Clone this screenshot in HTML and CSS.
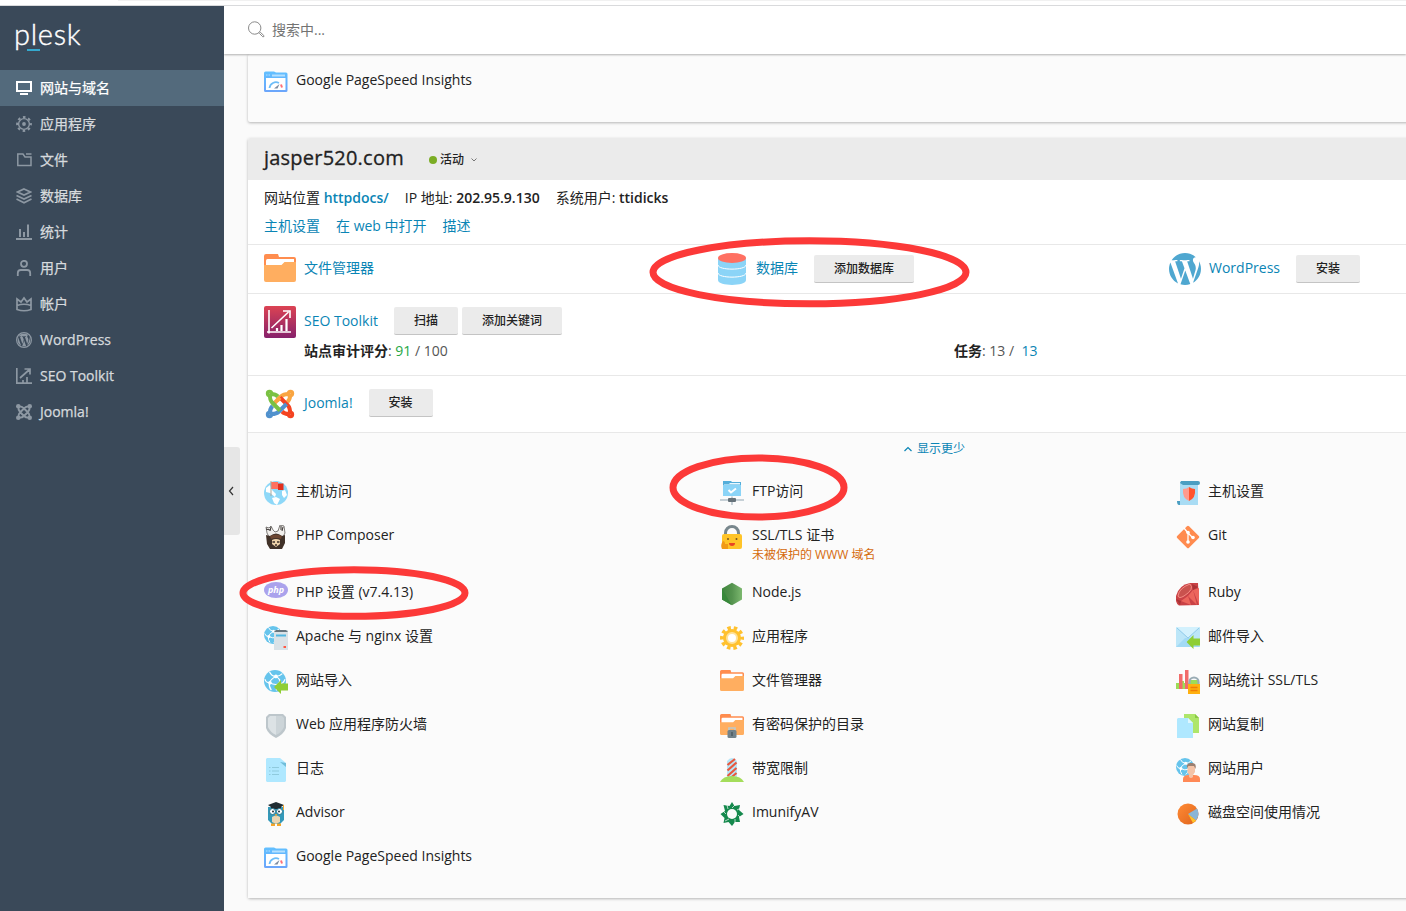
FILE: index.html
```
<!DOCTYPE html>
<html lang="zh-CN">
<head>
<meta charset="utf-8">
<title>Plesk</title>
<link rel="stylesheet" href="styles.css">
</head>
<body>
<svg class="sprite" width="0" height="0">
  <defs>
    <linearGradient id="g-seo" x1="0" y1="0" x2="0" y2="1"><stop offset="0" stop-color="#dc4353"/><stop offset="1" stop-color="#86216b"/></linearGradient>
    <linearGradient id="g-page" x1="0" y1="0" x2="0" y2="1"><stop offset="0" stop-color="#62c0ff"/><stop offset="1" stop-color="#6ba5fb"/></linearGradient>
    <linearGradient id="g-node" x1="0" y1="0" x2="1" y2="0"><stop offset="0" stop-color="#3e863d"/><stop offset=".5" stop-color="#55934f"/><stop offset="1" stop-color="#7cb86f"/></linearGradient>
    <linearGradient id="g-pie" x1="0" y1="0" x2="1" y2="1"><stop offset="0" stop-color="#ff8b35"/><stop offset="1" stop-color="#df631c"/></linearGradient>
  </defs>
  <symbol id="wp" viewBox="1.2 1.2 21.6 21.6"><path fill="currentColor" d="M21.469 6.825c.84 1.537 1.318 3.3 1.318 5.175 0 3.979-2.156 7.456-5.363 9.325l3.295-9.527c.615-1.54.82-2.771.82-3.864 0-.405-.026-.78-.07-1.11m-7.981.105c.647-.03 1.232-.105 1.232-.105.582-.075.514-.93-.067-.899 0 0-1.755.135-2.88.135-1.064 0-2.85-.15-2.85-.15-.585-.03-.661.855-.075.885 0 0 .54.061 1.125.09l1.68 4.605-2.37 7.08L5.354 6.9c.649-.03 1.234-.1 1.234-.1.585-.075.516-.93-.065-.896 0 0-1.746.138-2.874.138-.2 0-.438-.008-.69-.015C4.911 3.15 8.235 1.215 12 1.215c2.809 0 5.365 1.072 7.286 2.833-.046-.003-.091-.009-.141-.009-1.06 0-1.812.923-1.812 1.914 0 .89.513 1.643 1.06 2.531.411.72.89 1.643.89 2.977 0 .915-.354 1.994-.821 3.479l-1.075 3.585-3.9-11.61.001.014zM12 22.784c-1.059 0-2.081-.153-3.048-.437l3.237-9.406 3.315 9.087c.024.053.05.101.078.149-1.12.393-2.325.609-3.582.609M1.211 12c0-1.564.336-3.05.935-4.39L7.29 21.709C3.694 19.96 1.212 16.271 1.211 12"/></symbol>
  <symbol id="folder" viewBox="0 0 32 28"><path fill="#ff8d4f" d="M0 2a2 2 0 0 1 2-2h12l1 3h15a2 2 0 0 1 2 2v8H0z"/><path fill="#fff" d="M2 6.500a1.500 1.500 0 0 1 1.500-1.500H30v8H2z"/><path fill="#ffae60" d="M0 11h17.500l3-3H32v18a2 2 0 0 1-2 2H2a2 2 0 0 1-2-2z"/></symbol>
  <symbol id="globe" viewBox="0 0 24 24"><circle cx="12" cy="12" r="12" fill="#66c4ec"/><g fill="none" stroke="#fff" stroke-width="1.300"><path d="M6 2q2 5 7 5 4 0 7-3M13 7q-6 3-7 7-1 4 2 8M13 7q6 3 4 8-1 5-4 7M1 10q1 4 5 4 6 3 11 1 4 0 6-5"/></g><g fill="#fff"><circle cx="13" cy="7" r="2"/><circle cx="6.500" cy="14" r="2"/><circle cx="17" cy="15" r="1.800"/></g></symbol>
  <symbol id="pagespeed" viewBox="0 0 24 24"><path fill="url(#g-page)" d="M0 3a1.500 1.500 0 0 1 1.500-1.500H10L12 2.500h10A1.500 1.500 0 0 1 23.500 4V20.500a1.500 1.500 0 0 1-1.500 1.500H1.500A1.500 1.500 0 0 1 0 20.500z"/><path fill="#fff" d="M2 8h19.500v12H2z"/><path stroke="#b5e0ff" d="M2 5h1.500M4.500 5H6"/><path stroke="#b5e0ff" stroke-width="2" d="M8 5.500h13"/><path fill="none" stroke="#6dbdf8" stroke-width="1.800" d="M5.500 18a6.500 6.500 0 0 1 9.500-5"/><path fill="#7c8ba0" d="M10 18.500l5.500-4.500L13.500 18.500z"/><path fill="none" stroke="#ff6f78" stroke-width="2" d="M17 14.500l1 3"/></symbol>
  <symbol id="arrow" viewBox="0 0 14 14"><path fill="#8fce35" d="M0 7l7-7v3.500h7v7H7V14z"/></symbol>
</svg>

<div class="chrome"></div>
<div class="app">
  <aside class="sidebar">
    <div class="logo"><span>plesk</span><i></i></div>
    <nav class="menu">
      <a class="item active"><svg viewBox="0 0 16 16"><path d="M1 2h14v9H1zM4 14h8"/></svg>网站与域名</a>
      <a class="item"><svg viewBox="0 0 16 16"><circle cx="8" cy="8" r="5.400" stroke-width="1.400"/><circle cx="8" cy="8" r="6.900" stroke-width="2" stroke-dasharray="2.600 2.820" stroke-dashoffset="1.300"/><circle cx="8" cy="8" r="1.900" class="solid"/></svg>应用程序</a>
      <a class="item"><svg viewBox="0 0 16 16"><path d="M1.800 2h5.200l2 3h6v8.500H1.800zM10 2h5.500" stroke-width="1.500"/></svg>文件</a>
      <a class="item"><svg viewBox="0 0 16 16"><path d="M8 1l6.500 3L8 7 1.500 4zM.500 7.500L8 11l7.500-3.500M.500 11L8 14.700l7.500-3.700" stroke-width="1.700"/></svg>数据库</a>
      <a class="item"><svg viewBox="0 0 16 16"><path d="M0 15h16M4 5v8M8 8v5M12 .500V13"/></svg>统计</a>
      <a class="item"><svg viewBox="0 0 16 16"><circle cx="8" cy="3.800" r="3" stroke-width="1.800"/><path d="M1.800 16v-3q0-3 3-3h6.400q3 0 3 3v3" stroke-width="1.800"/></svg>用户</a>
      <a class="item"><svg viewBox="0 0 16 16"><path d="M1 13.500V3l4 3 3-4 3 4 4-3v10.500q-7 2.500-14 0zM1 9.500q7-2.500 14 0" stroke-width="1.700"/></svg>帐户</a>
      <a class="item"><svg viewBox="0 0 16 16"><circle cx="8" cy="8" r="7.400" stroke-width="1.200"/><use href="#wp" x="1.500" y="1.500" width="13" height="13"/></svg>WordPress</a>
      <a class="item"><svg viewBox="0 0 16 16"><path d="M.800 0v15.200H16M4 10l9.500-8.500M8.500 1H14v5.500M7 15v-3M11 15V9" stroke-width="1.700"/></svg>SEO Toolkit</a>
      <a class="item"><svg viewBox="0 0 16 16"><g class="solid"><circle cx="2.300" cy="2.300" r="2.300"/><circle cx="13.700" cy="2.300" r="2.300"/><circle cx="2.300" cy="13.700" r="2.300"/><circle cx="13.700" cy="13.700" r="2.300"/></g><path d="M2.500 2.500q3-.500 5.500 2l4 4q2 2 1.500 5M13.500 2.500q-3-.500-5.500 2l-4 4q-2 2-1.500 5M2.500 2.500q-.500 3 1.500 5.500l4 4q2 2 5.500 1.500M13.500 2.500q.500 3-1.500 5.500l-4 4q-2 2-5.500 1.500" stroke-width="1.900"/></svg>Joomla!</a>
    </nav>
  </aside>

  <main class="main">
    <header class="search"><svg width="18" height="18" viewBox="0 0 18 18"><circle cx="6.700" cy="7" r="6.200"/><path d="M11.300 12.300l1-1 3.500 3.200q.800 1.500-1 1.300z"/></svg><span>搜索中...</span></header>
    <div class="handle"><svg width="6" height="10" viewBox="0 0 6 10"><path d="M5 1L1.500 5 5 9"/></svg></div>

    <div class="scroll">
      <section class="card previous">
        <a class="tool"><svg viewBox="0 0 24 24"><use href="#pagespeed"/></svg><span>Google PageSpeed Insights</span></a>
      </section>

      <section class="card domain">
        <div class="domain-head"><h1>jasper520.com</h1><span class="status"><i></i>活动<svg width="6" height="4" viewBox="0 0 6 4"><path d="M.500.500L3 3 5.500.500"/></svg></span></div>
        <div class="info">
          <div><span>网站位置 <b class="link">httpdocs/</b></span><span>IP 地址: <b>202.95.9.130</b></span><span>系统用户: <b>ttidicks</b></span></div>
          <div class="link"><span>主机设置</span><span>在 web 中打开</span><span>描述</span></div>
        </div>

        <div class="quick">
          <div class="feature"><svg class="big" viewBox="0 0 32 32"><use href="#folder" y="1" width="32" height="28"/></svg><a class="link">文件管理器</a></div>
          <div class="feature"><svg class="big" viewBox="0 0 32 32"><path fill="#8bd4f7" d="M2 5v22c0 6.500 28 6.500 28 0V5z"/><path fill="none" stroke="#fff" d="M2 12c0 5.500 28 5.500 28 0M2 20c0 5.500 28 5.500 28 0"/><ellipse cx="16" cy="5" rx="14" ry="5" fill="#ff7062"/></svg><a class="link">数据库</a><button>添加数据库</button></div>
          <div class="feature"><svg class="big wp" viewBox="0 0 32 32"><use href="#wp" width="32" height="32"/></svg><a class="link">WordPress</a><button>安装</button></div>
        </div>

        <div class="seo">
          <div class="feature"><svg class="big" viewBox="0 0 32 32"><rect width="32" height="32" rx="2" fill="url(#g-seo)"/><g fill="none" stroke="#fff" stroke-width="1.600"><path d="M5 4v23.500M3 26h24M7.500 22L24.500 6M19 5h7v7"/><path d="M13 25v-3M17.500 25v-6M22.500 25V13" stroke-width="2.200"/></g></svg><a class="link">SEO Toolkit</a><button>扫描</button><button class="next">添加关键词</button></div>
          <div class="scores"><span><b>站点审计评分</b>: <em>91</em> / 100</span><span><b>任务</b>: 13 / &nbsp;<a class="link">13</a></span></div>
        </div>

        <div class="joomla">
          <div class="feature"><svg class="big" viewBox="0 0 32 32"><g fill="none" stroke-width="4"><g stroke="#f9a541"><circle cx="26.500" cy="5.500" r="1.700"/><path d="M26 6q.500 5-2.500 8M26 6q-6-.500-9 2.500l-7.500 7.500"/></g><g stroke="#f44321"><circle cx="26.500" cy="26.500" r="1.700"/><path d="M26 26q-5 .500-8-2.500M26 26q.500-6-2.500-9L16 9.500"/></g><g stroke="#5091cd"><circle cx="5.500" cy="26.500" r="1.700"/><path d="M6 26q-.500-5 2.500-8M6 26q6 .500 9-2.500l7.500-7.500"/></g><g stroke="#7ac143"><circle cx="5.500" cy="5.500" r="1.700"/><path d="M6 6q5-.500 8 2.500M6 6q-.500 6 2.500 9l7.500 7.500"/></g><path stroke="#f9a541" d="M16 9.500l-3 3"/></g></svg><a class="link">Joomla!</a><button>安装</button></div>
        </div>

        <div class="more-tools">
          <div class="less link"><svg width="8" height="6" viewBox="0 0 8 6"><path d="M.500 5L4 1.500 7.500 5"/></svg>显示更少</div>
          <div class="tools">
            <a class="tool"><svg viewBox="0 0 24 24"><circle cx="12" cy="12" r="12" fill="#8ed8f8"/><path fill="#fff" d="M2 7l4-3 2 5 4 4-1 3-5-4-4-1zM8 17l4-1 4 2-3 6-3-2zM18 10l3-1 2 5-3 3-2-3z"/><path fill="#ff705f" d="M7 1h7v7H7z"/><path fill="#e12f1e" d="M14 2.500h5.500v6.500H14z"/><path stroke="#ada79b" d="M7 0v15"/></svg><span>主机访问</span></a>
            <a class="tool"><svg viewBox="0 0 24 24"><path fill="#8bd4f7" d="M3 2h18v13H3z"/><path fill="#54aeda" d="M3 0h8l1 1h9v3H3z"/><path fill="#e7f7ff" d="M4 3h5l1-1h10v1.500H4z"/><path fill="none" stroke="#fff" stroke-width="2" d="M8.500 9l2.500 2.500L16 7.500"/><path fill="none" stroke="#c6d0d6" stroke-width="2" d="M0 19h24M12 15.500V24"/><rect x="8" y="17" width="8" height="4" rx="1" fill="#66727a"/></svg><span>FTP访问</span></a>
            <a class="tool"><svg viewBox="0 0 24 24"><path fill="#a9dcf4" d="M4 1h18v23H4z"/><path fill="#4a9ec2" d="M5 0h17q2 0 2 2t-2 2H7L4 2zM1 20h3v4H3q-2 0-2-4"/><path fill="#ff9b8e" d="M7 8q4 0 6-2v14q-7-3-6-12"/><path fill="#ff532d" d="M13 6q3 2 6 2 1 9-6 12z"/></svg><span>主机设置</span></a>

            <a class="tool"><svg viewBox="0 0 24 24"><path fill="#f1efec" stroke="#4a4643" stroke-width=".700" d="M2 2l3 1 2-2 2 4 2 2 3-1 2-6 4 1 1 7-3 6H6L3 8z"/><path stroke="#35302e" d="M2 4l4 1M7 2L6 6M17 1v4M19 2l-1 4"/><path fill="#403128" d="M2 10l4 1q6-5 12 0l3-1v8l-3 6H6l-3-5z"/><path fill="#efd2a9" d="M8 15q4-2 8 0v4l-4 3-4-3z"/><path fill="#6d4631" d="M6 11q6-3 12 0l-1 3q-5-2-10 0z"/><path stroke="#3c2f29" stroke-width="1.300" d="M8.500 17h2.500M13 17h2.500M11 20h2"/></svg><span>PHP Composer</span></a>
            <a class="tool two-line"><svg viewBox="0 0 24 24"><path fill="none" stroke="#78878d" stroke-width="3" d="M5.500 11V8a6.500 6.500 0 0 1 13 0v3"/><rect x="2" y="9" width="20" height="15" rx="2" fill="#ffc428"/><g fill="#765521"><circle cx="8" cy="14" r="1"/><circle cx="16.500" cy="14" r="1"/></g><path fill="#e94425" d="M9 18h6q0 3-3 3t-3-3"/><path fill="#f19a17" d="M3 16q2 0 2 3h3v5H2q-2-4 1-8"/></svg><span>SSL/TLS 证书<small>未被保护的 WWW 域名</small></span></a>
            <a class="tool"><svg viewBox="0 0 24 24"><rect x="3.600" y="3.600" width="16.800" height="16.800" rx="1.500" transform="rotate(45 12 12)" fill="#ff8b4f"/><path fill="none" stroke="#fff" stroke-width="1.300" d="M8 3l4 5v9M12 8l5 5"/><g fill="#fff"><circle cx="12" cy="7.500" r="1.800"/><circle cx="12" cy="17" r="1.800"/><circle cx="17" cy="12.500" r="1.800"/></g></svg><span>Git</span></a>

            <a class="tool"><svg viewBox="0 0 24 24"><ellipse cx="12" cy="8" rx="12" ry="8" fill="#aaa2ec"/><text class="php-label" x="12" y="10.500">php</text></svg><span>PHP 设置 (v7.4.13)</span></a>
            <a class="tool"><svg viewBox="0 0 24 24"><path fill="url(#g-node)" d="M12 .800l10 5.700v11L12 23.200 2 17.500v-11z"/><path fill="#37883a" d="M2 6.500L11.500 23 2 17.500z"/></svg><span>Node.js</span></a>
            <a class="tool"><svg viewBox="0 0 24 24"><path fill="#c94246" d="M0 14Q3 3 14 1l8 0 1 22-20 .500q-4-2-3-9.500"/><path fill="#ec655c" d="M17 8l6-2v17zM5 19l7-5 3 9zM12 14l5-6 4 15z"/><path fill="#a93336" d="M16 2l6 3-5 3zM0 17l5 2-1 4z"/><path fill="#c9524e" stroke="#ff9d93" stroke-width=".800" d="M2 14Q3 6 14 2q5 5-6 12-5 3-6 0"/></svg><span>Ruby</span></a>

            <a class="tool"><svg viewBox="0 0 24 24"><use href="#globe" width="18" height="18"/><path fill="#d9e2e7" d="M10 4h14v20H10z"/><path fill="#66747d" d="M12 4h10l2 2H10z"/><path stroke="#51b7e1" stroke-width="2" d="M12 9.500h10"/><path fill="#ff5a45" d="M19.500 20h2.500v2h-2.500z"/></svg><span>Apache 与 nginx 设置</span></a>
            <a class="tool"><svg viewBox="0 0 24 24"><circle cx="12" cy="12" r="10" fill="none" stroke="#ffc12e" stroke-width="4" stroke-dasharray="3.400 2.883" stroke-dashoffset="1.700"/><circle cx="12" cy="12" r="9" fill="#ffc12e"/><circle cx="12" cy="12" r="5" fill="#fff" stroke="#ffe29a" stroke-width="2"/></svg><span>应用程序</span></a>
            <a class="tool"><svg viewBox="0 0 24 24"><path fill="#bce6f8" d="M0 1h24v20H0z"/><path fill="#a2daf5" d="M0 21l9-9h6l9 9z"/><path fill="#d3f1fd" d="M0 1h24L12 12z"/><path fill="none" stroke="#8fcaea" d="M1 2l11 10L23 2"/><use href="#arrow" x="10.500" y="9" width="14" height="14"/></svg><span>邮件导入</span></a>

            <a class="tool"><svg viewBox="0 0 24 24"><use href="#globe" width="22" height="22"/><use href="#arrow" x="10" y="10" width="14" height="14"/></svg><span>网站导入</span></a>
            <a class="tool"><svg viewBox="0 0 24 24"><use href="#folder" width="24" height="21"/></svg><span>文件管理器</span></a>
            <a class="tool"><svg viewBox="0 0 24 24"><path fill="#9ddc57" d="M0 13h3v-2h5v2h6v-3h8v9H0z"/><path fill="#f16b69" d="M3 4h3.500v15H3zM9 0h3.500v19H9z"/><path fill="none" stroke="#9aacb5" stroke-width="2.200" d="M13.500 16v-4a4.500 4.500 0 0 1 9 0v4"/><path fill="#ffb00f" d="M12 14h12v10H12z"/><path stroke="#f07d06" stroke-width="1.400" d="M14.500 17.500h7M14.500 20.500h7"/></svg><span>网站统计 SSL/TLS</span></a>

            <a class="tool"><svg viewBox="0 0 24 24"><path fill="#bdc6cb" d="M5 0h14l3 3v11q-2 6-10 10Q4 20 2 14V3z"/><path fill="#dce2e5" d="M6 2h6v19q-6-3-8-8V4z"/><path fill="#ccd4d8" d="M12 2h6l2 2v9q-2 5-8 8z"/></svg><span>Web 应用程序防火墙</span></a>
            <a class="tool"><svg viewBox="0 0 24 24"><use href="#folder" width="24" height="21"/><path fill="none" stroke="#bdc8c9" stroke-width="1.700" d="M9 17v-3h6v3"/><rect x="7.500" y="16" width="9" height="8" rx="1.500" fill="#72828a"/><path stroke="#4d5a61" stroke-width="1.500" d="M12 18v4"/></svg><span>有密码保护的目录</span></a>
            <a class="tool"><svg viewBox="0 0 24 24"><path fill="#aee66a" d="M8 0h11l4 4v15H8z"/><path fill="#8ac844" d="M19 0v4h4z"/><path fill="#afe8ff" d="M2 4h10l5 5v15H1V5z"/><path fill="#dff7ff" d="M12 4v5h5z"/></svg><span>网站复制</span></a>

            <a class="tool"><svg viewBox="0 0 24 24"><path fill="#afe8ff" d="M3 0h13l6 5v18l-1 1H3l-1-1V1z"/><path fill="#70bdd9" d="M16 4l6 5V5z"/><path stroke="#8fcadd" stroke-width="1" d="M5 9.500h1.500M8 9.500h7M5 13h1.500M8 13h7M5 16.500h1.500M8 16.500h7"/></svg><span>日志</span></a>
            <a class="tool"><svg viewBox="0 0 24 24"><path fill="#b8e5f7" d="M7 3q5-6 10 0v18H7z"/><path stroke="#e8583f" stroke-width="2.200" d="M7.500 7L15 1M7.500 12.500l9-8M7.500 18l9-8M10 20.500l6.500-5.500"/><path fill="#a4dd5b" d="M0 24q3-6 12-6t12 6z"/></svg><span>带宽限制</span></a>
            <a class="tool"><svg viewBox="0 0 24 24"><use href="#globe" width="18" height="18"/><path fill="#ff8956" d="M7 24v-3q0-4 6-4h5q6 0 6 4v3z"/><path fill="#f4c3a7" d="M11.500 8q4-3 7.500 0v6l-2 3v2q-2 2-4 0v-2l-1.500-3z"/><path fill="#9a7f70" d="M11 10q-1-5 4-5 6-1 4.500 6l-1.500-3h-5.500z"/></svg><span>网站用户</span></a>

            <a class="tool"><svg viewBox="0 0 24 24"><path fill="#3499b9" d="M4 5h16v13l-4 4H8l-4-4z"/><path fill="#ead5b3" d="M8 15q4-3 8 0v5l-4 2-4-2z"/><path fill="#202c32" d="M4 3l8-3 8 3-3 2v2H7V5z"/><g fill="#fff" stroke="#247792"><circle cx="8.500" cy="9.500" r="3"/><circle cx="15.500" cy="9.500" r="3"/></g><g fill="#263038"><circle cx="9" cy="9.500" r="1"/><circle cx="15" cy="9.500" r="1"/></g><path fill="#f5a62a" d="M11 12h2l-1 3zM7 21.500h4V24H7zM13 21.500h4V24h-4zM19 3h1v5h-1z"/></svg><span>Advisor</span></a>
            <a class="tool"><svg viewBox="0 0 24 24"><path fill="#15894d" d="M12 0l2.500 4 5.500-1-1 5 4.500 4-4.500 3 1 5-5 0-3 4-3.500-4-5 1 1-5L.500 12 5 9 3.500 3l6 1z"/><circle cx="12" cy="12" r="5" fill="#fbfbfb"/><path stroke="#fbfbfb" stroke-width=".700" d="M12 6l3-3M17 8l4-2M18 13l3 3M15 17v4M9 17l-4 2M6 12l-3-3M8 7L7 3"/></svg><span>ImunifyAV</span></a>
            <a class="tool"><svg viewBox="0 0 24 24"><circle cx="12" cy="12" r="10.500" fill="url(#g-pie)"/><path fill="#8bb5d5" d="M12 12l9-5.500q3.500 6.500-1 12z"/><path fill="#ffc32b" d="M12 12l8 6.500-3 2.500z"/></svg><span>磁盘空间使用情况</span></a>

            <a class="tool"><svg viewBox="0 0 24 24"><use href="#pagespeed"/></svg><span>Google PageSpeed Insights</span></a>
          </div>
        </div>
      </section>
    </div>
  </main>
</div>
<svg class="marks" viewBox="0 0 1406 911"><ellipse cx="809.500" cy="272.300" rx="156.500" ry="31.500"/><ellipse cx="758.500" cy="487.500" rx="85.500" ry="29.500"/><ellipse cx="354" cy="593" rx="111" ry="23.300"/></svg>
</body>
</html>
```
FILE: styles.css
```
* { box-sizing: border-box; }
body {
  margin: 0;
  width: 1406px;
  height: 911px;
  overflow: hidden;
  background: #fff;
  color: #222;
  font: 14px/20px "Open Sans", "Noto Sans CJK SC", sans-serif;
}
svg { display: block; flex: none; }
.sprite { position: absolute; }
.chrome { height: 6px; border-bottom: 1px solid #d9dadc; }
.chrome::before { content: ""; display: block; height: 1px; margin-left: 118px; background: #f1f1f1; }
.app { display: flex; height: 905px; }
.sidebar { width: 224px; flex: none; background: #3a4959; }
.logo {
  height: 64px;
  padding: 10px 0 0 14px;
  color: #fff;
  font: 300 29px/36px Lato, sans-serif;
  letter-spacing: .7px;
  -webkit-text-stroke: .4px #fff;
}
.logo span { display: block; }
.logo i { display: block; width: 13px; height: 2px; margin: -3px 0 0 13px; background: #35a9ce; }
.item {
  display: flex;
  align-items: center;
  gap: 8px;
  height: 36px;
  padding-left: 16px;
  color: #d6dadd;
  font-weight: 400;
  -webkit-text-stroke: .25px currentColor;
}
.item svg { width: 16px; height: 16px; fill: none; stroke: #8d98a3; stroke-width: 2; color: #8d98a3; }
.item .solid { fill: #8d98a3; stroke: none; }
.item use { stroke: none; }
.active { background: #536a7c; color: #fff; }
.active svg { stroke: #fff; }

.main { position: relative; flex: 1; min-width: 0; overflow: hidden; background: #fafafa; }
.search {
  position: relative;
  z-index: 1;
  display: flex;
  align-items: center;
  gap: 6px;
  height: 48px;
  padding-left: 24px;
  background: #fff;
  box-shadow: 0 1px 2px rgba(0, 0, 0, .3);
  color: #737373;
}
.search svg { fill: none; stroke: #8a8a8a; }
.handle {
  position: absolute;
  left: 0;
  top: 441px;
  width: 16px;
  height: 88px;
  display: flex;
  align-items: center;
  padding-left: 4px;
  background: #e6e6e6;
  border-radius: 0 3px 3px 0;
}
.handle path { fill: none; stroke: #333; stroke-width: 1.2; }
.scroll { width: 1400px; padding-left: 24px; }
.card { width: 1376px; border-radius: 2px; box-shadow: 0 1px 3px rgba(0, 0, 0, .28); background: #fff; }
.previous { height: 68px; padding: 15px 16px; background: #fbfbfb; }
.domain { height: 760px; margin-top: 16px; }
.domain-head { display: flex; align-items: center; gap: 25px; height: 42px; padding-left: 16px; background: #ebebeb; border-radius: 2px 2px 0 0; }
h1 { margin: 0 0 2px; font-size: 20px; line-height: 26px; font-weight: 400; letter-spacing: .22px; -webkit-text-stroke: .3px #222; }
.status { display: flex; align-items: center; padding-top: 1px; font-size: 12px; font-weight: 500; }
.status i { width: 8px; height: 8px; margin-right: 3px; border-radius: 50%; background: #7bad24; }
.status svg { margin-left: 7px; fill: none; stroke: #777; }
.info { height: 65px; padding: 4px 16px; border-bottom: 1px solid #e8e8e8; }
.info div { display: flex; gap: 16px; height: 28px; align-items: center; }
b { font-weight: 600; }
.link { color: #0a85b5; }
.quick { display: grid; grid-template-columns: 452px 453px 1fr; height: 49px; padding: 8px 16px; border-bottom: 1px solid #e8e8e8; }
.feature { display: flex; align-items: flex-start; height: 32px; }
.feature .link { padding-top: 5px; margin: 0 16px 0 8px; }
.big { width: 32px; height: 32px; }
.wp { color: #4fa7d0; }
button {
  height: 28px;
  margin-top: 2px;
  padding: 0 20px;
  border: 0;
  border-bottom: 1px solid #c4c4c4;
  border-radius: 2px;
  background: #ebebeb;
  color: #222;
  font: 500 12px/26px "Open Sans", "Noto Sans CJK SC", sans-serif;
}
.next { margin-left: 4px; }
.seo { height: 82px; padding: 12px 16px; border-bottom: 1px solid #e8e8e8; }
.feature .big + .link { white-space: nowrap; }
.seo .feature button, .joomla .feature button { margin-top: 1px; }
.scores { display: grid; grid-template-columns: 650px 1fr; padding: 3px 0 0 40px; color: #555; }
.scores b { color: #222; }
.scores em { color: #28a745; font-style: normal; }
.joomla { height: 57px; padding: 12px 16px; border-bottom: 1px solid #e8e8e8; }
.more-tools { height: 465px; padding-top: 6px; background: #fbfbfb; }
.less { display: flex; justify-content: center; align-items: center; gap: 5px; width: 1373px; font-size: 12px; }
.less svg { fill: none; stroke: #0a85b5; stroke-width: 1.2; }
.tools { display: grid; grid-template-columns: 456px 456px 1fr; padding: 21px 0 0 16px; }
.tool { display: flex; gap: 8px; height: 44px; align-items: flex-start; }
.tool svg { width: 24px; height: 24px; margin-top: 1px; }
.tool span { padding-top: 1px; }
.two-line { height: 57px; }
small { display: block; padding-top: 1px; font-size: 12px; line-height: 18px; color: #d56a0c; }
.php-label { fill: #fff; font: italic 700 9px "Open Sans", sans-serif; text-anchor: middle; }
.marks { position: absolute; left: 0; top: 0; width: 1406px; height: 911px; fill: none; stroke: #fc3938; stroke-width: 7; }
```
